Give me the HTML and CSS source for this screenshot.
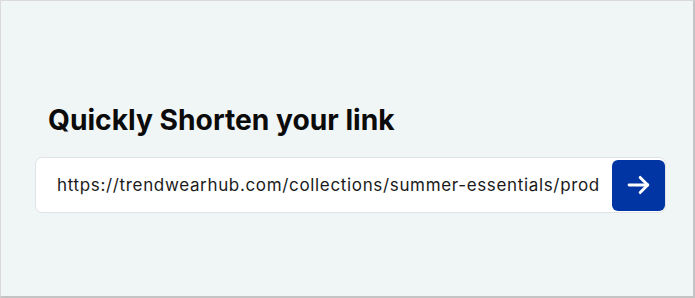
FILE: index.html
```html
<!DOCTYPE html>
<html>
<head>
  <meta charset="UTF-8">
  <meta name="viewport" content="width=device-width, initial-scale=1">
  <title>Shorten link</title>
  <link rel="stylesheet" href="styles.css">
</head>
<body>

<main class="frame">
  <section class="shortener">
    <h1 class="shortener__title">Quickly Shorten your link</h1>
    <form class="shortener__form" onsubmit="return false">
      <input class="shortener__input" type="text" value="https://trendwearhub.com/collections/summer-essentials/products/linen-shirt">
      <button class="button button--go" type="submit" aria-label="Shorten">
        <svg width="28" height="28" viewBox="0 0 24 24" fill="none" stroke="#fff" stroke-width="2.5" stroke-linecap="round" stroke-linejoin="round">
          <path d="M3.5 12h16"/>
          <path d="M13 5.5l6.5 6.5-6.5 6.5"/>
        </svg>
      </button>
    </form>
  </section>
</main>

</body>
</html>
```

FILE: styles.css
```css
html,
body {
  margin: 0;
  height: 100%;
  -webkit-font-smoothing: antialiased;
}

body {
  font-family: Inter, "Noto Sans", Arial, sans-serif;
  color: #111;
}

.frame {
  box-sizing: border-box;
  height: 298px;
  background-color: #f0f5f5;
  border-top: 1px solid #dadada;
  border-left: 1px solid #dadada;
  border-right: 2px solid #c4c4c4;
  border-bottom: 2px solid #c4c4c4;
  padding: 100px 27px 0 34px;
}

.shortener__title {
  margin: 0 0 18px 13px;
  font-size: 28.2px;
  font-weight: 700;
  line-height: 38px;
  color: #0b0b0b;
}

.shortener__form {
  display: flex;
  align-items: center;
  height: 56px;
  box-sizing: border-box;
  padding: 2px 0 2px 21px;
  background-color: #fff;
  border: 1px solid #e1e4e4;
  border-radius: 7px;
}

.shortener__input {
  flex: 1;
  min-width: 0;
  height: 100%;
  padding: 0;
  margin-right: 12px;
  border: 0;
  outline: none;
  font-family: inherit;
  font-size: 17px;
  letter-spacing: 0.66px;
  color: #1a1a1a;
  background: transparent;
}

.button {
  border: 0;
  cursor: pointer;
}

.button--go {
  display: flex;
  align-items: center;
  justify-content: center;
  width: 53px;
  height: 51px;
  border-radius: 6px;
  background-color: #0035a3;
}
```
